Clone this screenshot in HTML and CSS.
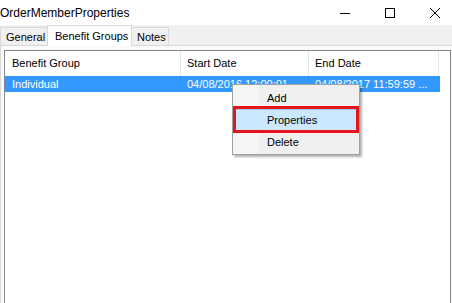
FILE: index.html
```html
<!DOCTYPE html>
<html lang="en">
<head>
    <meta charset="UTF-8">
    <title>OrderMemberProperties</title>
    <link rel="stylesheet" href="styles.css">
</head>
<body>
    <!-- Title bar -->
    <div class="titlebar">
        <span class="title">OrderMemberProperties</span>
        <div class="caption-buttons">
            <svg width="10" height="10" viewBox="0 0 10 10"><path d="M0 5.5h10" stroke="#000" stroke-width="1"/></svg>
            <svg width="10" height="10" viewBox="0 0 10 10"><rect x="0.5" y="0.5" width="9" height="9" fill="none" stroke="#000" stroke-width="1"/></svg>
            <svg width="10" height="10" viewBox="0 0 10 10"><path d="M0 0L10 10M10 0L0 10" stroke="#000" stroke-width="1"/></svg>
        </div>
    </div>

    <!-- Tabs -->
    <div class="tabs">
        <div class="tab tab-general">General</div>
        <div class="tab tab-groups active">Benefit Groups</div>
        <div class="tab tab-notes">Notes</div>
    </div>

    <div class="page">
        <div class="listview">
            <div class="header">
                <div class="col col-group">Benefit Group</div>
                <div class="col col-start">Start Date</div>
                <div class="col col-end">End Date</div>
            </div>
            <div class="row selected">
                <div class="col col-group">Individual</div>
                <div class="col col-start">04/08/2016 12:00:01</div>
                <div class="col col-end">04/08/2017 11:59:59 ...</div>
            </div>
        </div>
    </div>

    <!-- Context menu -->
    <div class="context-menu">
        <div class="menu-item">Add</div>
        <div class="menu-item hover">Properties</div>
        <div class="menu-item">Delete</div>
    </div>
</body>
</html>
```

FILE: styles.css
```css
body {
    margin: 0;
    font-family: "Liberation Sans", Arial, sans-serif;
    font-size: 11px;
    color: #000;
    background: #f0f0f0;
    width: 452px;
    height: 303px;
    overflow: hidden;
}

.titlebar {
    height: 25px;
    background: #fff;
    display: flex;
    align-items: center;
}

.title {
    font-size: 12px;
    padding-top: 1px;
}

.caption-buttons {
    margin-left: auto;
    display: flex;
    align-items: center;
    gap: 35px;
    padding-right: 12px;
    padding-top: 1px;
}

.caption-buttons svg {
    display: block;
}

.tabs {
    height: 20px;
    display: flex;
    align-items: flex-end;
    background: #f0f0f0;
}

.tab {
    box-sizing: border-box;
    height: 18px;
    line-height: 18px;
    padding-left: 5px;
    border: 1px solid #d9d9d9;
    border-bottom: none;
    background: #f0f0f0;
    margin-right: -1px;
    white-space: nowrap;
}

.tab-general {
    width: 48px;
}

.tab-groups {
    width: 85px;
    padding-left: 7px;
}

.tab-notes {
    width: 38px;
}

.tab.active {
    height: 21px;
    line-height: 20px;
    background: #fff;
    position: relative;
    z-index: 1;
    margin-bottom: -1px;
}

.page {
    border-top: 1px solid #d9d9d9;
    border-left: 1px solid #d9d9d9;
    background: #fafafa;
    padding: 4px 0 0 3px;
    height: 260px;
}

.listview {
    border: 1px solid #828790;
    border-bottom: none;
    background: #fff;
    height: 100%;
    width: 445px;
}

.header,
.row {
    display: flex;
}

.header {
    height: 25px;
    align-items: center;
}

.header .col {
    height: 25px;
    line-height: 25px;
    border-right: 1px solid #e5e5e5;
}

.col {
    padding-left: 7px;
    box-sizing: border-box;
    white-space: nowrap;
    overflow: hidden;
}

.col-group {
    width: 176px;
}

.col-start {
    width: 128px;
    padding-left: 6px;
}

.col-end {
    width: 130px;
    padding-left: 6px;
}

.row {
    height: 16px;
    line-height: 16px;
    width: 435px;
}

.row.selected {
    background: #3399ff;
    color: #fff;
}

.context-menu {
    position: absolute;
    left: 232px;
    top: 84px;
    width: 126px;
    padding: 2px 0 1px;
    border: 1px solid #a0a0a0;
    box-shadow: 2px 2px 2px rgba(0, 0, 0, 0.3);
    background: linear-gradient(to right, #f5f5f5 26px, #f0f0f0 26px);
}

.menu-item {
    height: 22px;
    line-height: 22px;
    padding-left: 34px;
    position: relative;
}

.menu-item.hover {
    background: #cce8ff;
    box-shadow: inset 0 0 0 1px #99d1ff;
    margin: 0 2px;
    padding-left: 32px;
}

.menu-item.hover::after {
    content: "";
    position: absolute;
    left: -2px;
    top: -3px;
    right: -2px;
    bottom: -2px;
    border: 3px solid #e8141b;
}
```
